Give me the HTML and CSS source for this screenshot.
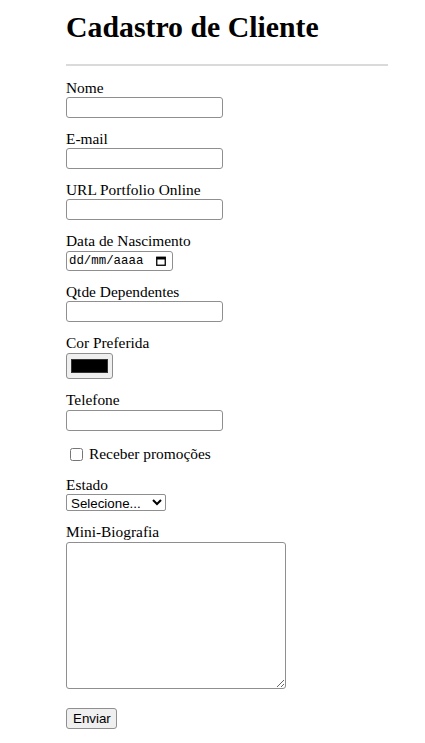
FILE: index.html
```html
<!DOCTYPE html>
<html lang="pt-BR">
<head>
<meta charset="utf-8">
<title>Cadastro de Cliente</title>
<link rel="stylesheet" href="styles.css">
</head>
<body>
<main class="page">
  <h1 class="title">Cadastro de Cliente</h1>
  <hr class="divider">
  <form class="form">
    <div class="field">
      <label class="label" for="nome">Nome</label>
      <input class="text-input" type="text" id="nome">
    </div>
    <div class="field">
      <label class="label" for="email">E-mail</label>
      <input class="text-input" type="email" id="email">
    </div>
    <div class="field">
      <label class="label" for="url">URL Portfolio Online</label>
      <input class="text-input" type="url" id="url">
    </div>
    <div class="field">
      <label class="label" for="nasc">Data de Nascimento</label>
      <span class="date-field">
        <input class="date-text" type="text" id="nasc" placeholder="dd/mm/aaaa">
        <svg class="date-icon" width="10" height="10" viewBox="0 0 10 10" aria-hidden="true">
          <rect x="0.75" y="1.25" width="8.5" height="8" fill="none" stroke="#000" stroke-width="1.3"/>
          <rect x="0.5" y="1" width="9" height="2.5" fill="#000"/>
        </svg>
      </span>
    </div>
    <div class="field">
      <label class="label" for="dep">Qtde Dependentes</label>
      <input class="text-input" type="number" id="dep">
    </div>
    <div class="field">
      <label class="label" for="cor">Cor Preferida</label>
      <input class="color-input" type="color" id="cor" value="#000000">
    </div>
    <div class="field">
      <label class="label" for="tel">Telefone</label>
      <input class="text-input shifted" type="tel" id="tel">
    </div>
    <div class="check">
      <input class="checkbox" type="checkbox" id="promo">
      <label class="check-label" for="promo">Receber promoções</label>
    </div>
    <div class="field">
      <label class="label" for="estado">Estado</label>
      <select class="select" id="estado">
        <option>Selecione...</option>
      </select>
    </div>
    <div class="field field-bio">
      <label class="label" for="bio">Mini-Biografia</label>
      <textarea class="textarea" id="bio"></textarea>
    </div>
    <div class="field">
      <button class="button" type="submit">Enviar</button>
    </div>
  </form>
</main>
</body>
</html>
```

FILE: styles.css
```css
html, body {
  margin: 0;
  padding: 0;
}
body {
  font-family: "Liberation Serif", "Times New Roman", serif;
  font-size: 15.4px;
  color: #000;
  background: #fff;
}
.page {
  width: 322px;
  margin: 0 0 0 66px;
  padding: 10px 0 20px;
}
.title {
  font-size: 29.8px;
  line-height: 34px;
  font-weight: bold;
  margin: 0 0 20px;
}
.divider {
  margin: 0 0 13px;
  height: 0;
  border: none;
  border-top: 2px solid #dadada;
}
.form {
  display: flex;
  flex-direction: column;
  align-items: flex-start;
  gap: 12px;
}
.field {
  display: flex;
  flex-direction: column;
  align-items: flex-start;
}
.field-bio {
  margin-bottom: 7px;
}
.label {
  line-height: 18px;
}
.text-input {
  box-sizing: border-box;
  width: 157px;
  height: 21px;
  margin: 0;
  padding: 1px 2px;
  border: 1px solid #8f8f8f;
  border-radius: 3px;
  background: #fff;
  font: 13.33px "Liberation Sans", Arial, sans-serif;
}
.text-input.shifted {
  margin-top: 1px;
}
.date-field {
  box-sizing: border-box;
  display: flex;
  align-items: center;
  width: 107px;
  height: 20px;
  margin-top: 1px;
  padding: 0 6px 0 2px;
  border: 1px solid #8f8f8f;
  border-radius: 3px;
  background: #fff;
}
.date-text {
  flex: 1;
  min-width: 0;
  margin: 0;
  padding: 0;
  border: none;
  outline: none;
  background: transparent;
  font: 12.4px "Liberation Mono", "Courier New", monospace;
  color: #000;
}
.date-text::placeholder {
  color: #000;
  opacity: 1;
}
.date-icon {
  flex: none;
}
.color-input {
  box-sizing: border-box;
  width: 47px;
  height: 26px;
  margin: 1px 0 0;
  padding: 1px 2px;
  border: 1px solid #8f8f8f;
  border-radius: 3px;
  background: #efefef;
  cursor: pointer;
}
.color-input::-webkit-color-swatch-wrapper {
  padding: 4px 2px;
}
.color-input::-webkit-color-swatch {
  border: 1px solid #333;
  border-radius: 0;
}
.check {
  display: flex;
  align-items: center;
  height: 20px;
  margin-top: 1px;
}
.checkbox {
  width: 13px;
  height: 13px;
  margin: 0 3px 0 4px;
}
.check-label {
  padding-left: 3px;
  line-height: 18px;
}
.select {
  box-sizing: border-box;
  width: 100px;
  height: 17px;
  margin: 0;
  padding: 0;
  border: 1px solid #8f8f8f;
  border-radius: 2px;
  background: #fff;
  font: 13.33px "Liberation Sans", Arial, sans-serif;
  color: #000;
}
.textarea {
  box-sizing: border-box;
  width: 220px;
  height: 147px;
  margin: 1px 0 0;
  padding: 2px;
  border: 1px solid #8f8f8f;
  border-radius: 3px;
  font: 13.33px "Liberation Mono", monospace;
}
.button {
  box-sizing: border-box;
  width: 51px;
  height: 21px;
  margin: 0;
  padding: 1px 6px;
  border: 1px solid #8f8f8f;
  border-radius: 3px;
  background: #efefef;
  font: 13.33px "Liberation Sans", Arial, sans-serif;
  color: #000;
}
```
